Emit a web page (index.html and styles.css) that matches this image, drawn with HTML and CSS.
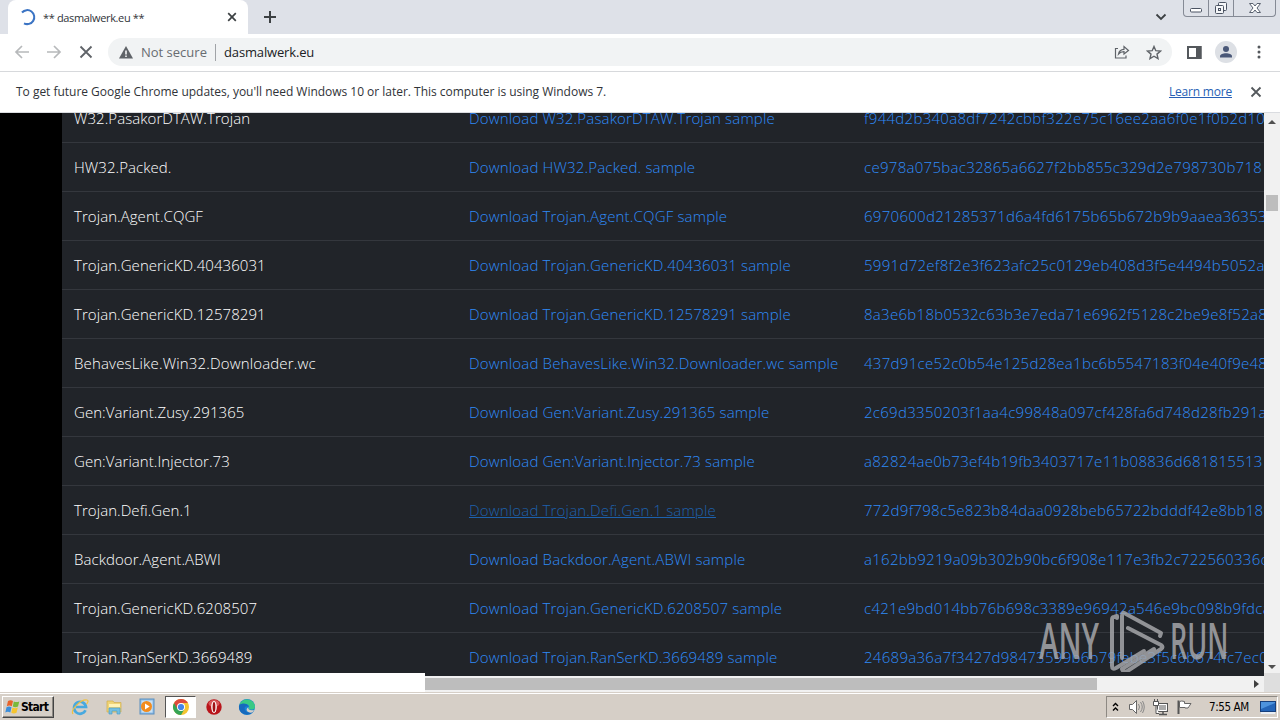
FILE: index.html
```html
<!DOCTYPE html>
<html lang="en">
<head>
    <meta charset="UTF-8">
    <title>** dasmalwerk.eu **</title>
    <link rel="stylesheet" href="styles.css">
</head>
<body>
    <div class="tabstrip">
        <div class="tab">
            <svg class="spinner" width="18" height="18" viewBox="0 0 18 18"><path d="M3 4.500A7 7 0 1 1 5 15.300" fill="none" stroke="#3b74c4" stroke-width="2"/></svg>
            <span class="tab-title">** dasmalwerk.eu **</span>
            <svg width="10" height="10" viewBox="0 0 10 10"><path d="M1.2 1.2l7.6 7.6M8.8 1.2L1.2 8.8" stroke="#3c4043" stroke-width="1.7"/></svg>
        </div>
        <svg class="new-tab" width="14" height="14" viewBox="0 0 14 14"><path d="M7 1v12M1 7h12" stroke="#3c4043" stroke-width="2"/></svg>
        <svg class="tab-search" width="12" height="8" viewBox="0 0 12 8"><path d="M1.5 1.5L6 6l4.500-4.500" fill="none" stroke="#3c4043" stroke-width="1.8"/></svg>
        <div class="window-buttons">
            <span><svg width="14" height="16" viewBox="0 0 14 16"><rect x="1.500" y="8.500" width="11" height="3.500" rx="1" fill="#fff" stroke="#4b5362"/></svg></span>
            <span><svg width="14" height="16" viewBox="0 0 14 16"><rect x="4.500" y="2.500" width="8" height="8" rx="1" fill="#f5f6f8" stroke="#4b5362"/><rect x="1.500" y="5.500" width="8" height="8" rx="1" fill="#f5f6f8" stroke="#4b5362"/><rect x="4.500" y="8.500" width="2" height="2" fill="none" stroke="#4b5362"/></svg></span>
            <span class="wide"><svg width="14" height="16" viewBox="0 0 14 16"><path d="M1.500 3.500h3.500l2 2.500 2-2.500h3.500L9 8l3.500 4.500H9L7 10l-2 2.500H1.500L5 8z" fill="#fff" stroke="#5a6270"/></svg></span>
        </div>
    </div>

    <div class="toolbar">
        <svg class="nav" width="16" height="14" viewBox="0 0 16 14"><path d="M15 7H2M8 1L2 7l6 6" fill="none" stroke="#b7b9bb" stroke-width="1.700"/></svg>
        <svg class="nav" width="16" height="14" viewBox="0 0 16 14"><path d="M1 7h13M8 1l6 6-6 6" fill="none" stroke="#b7b9bb" stroke-width="1.700"/></svg>
        <svg class="nav stop" width="14" height="14" viewBox="0 0 14 14"><path d="M1.500 1.500l11 11M12.500 1.500l-11 11" stroke="#5f6368" stroke-width="1.800"/></svg>
        <div class="omnibox">
            <svg width="14" height="13" viewBox="0 0 14 13"><path d="M7 0l7 12.500H0z" fill="#5f6368"/><path d="M7 4.500v4M7 9.500v1.500" stroke="#fff" stroke-width="1.500"/></svg>
            <span class="not-secure">Not secure</span>
            <span class="divider"></span>
            <span class="address">dasmalwerk.eu</span>
            <svg class="share" width="16" height="14" viewBox="0 0 16 14"><path d="M4 3.500H1.500v9.500H12v-2.500M4.500 9C5 6 7 4.500 10 4.300V1.500L14.500 5.500 10 9V6.700C7.500 6.700 6 7.200 4.500 9z" fill="none" stroke="#5f6368" stroke-width="1.200"/></svg>
            <svg width="16" height="15" viewBox="0 0 16 15"><path d="M8 1.500l1.800 4.200 4.700.4-3.500 3 1 4.500-4-2.400-4 2.400 1-4.500-3.500-3 4.700-.4z" fill="none" stroke="#5f6368" stroke-width="1.400"/></svg>
        </div>
        <svg class="panel" width="15" height="13" viewBox="0 0 15 13"><path d="M1 1h12.500v11H1z" fill="none" stroke="#54585c" stroke-width="2"/><path d="M9 0h5.500v13H9z" fill="#54585c"/></svg>
        <svg class="avatar" width="22" height="22" viewBox="0 0 22 22"><circle cx="11" cy="11" r="11" fill="#dde0e5"/><circle cx="11" cy="8" r="3" fill="#4a5878"/><path d="M5 16.500v-1.200c0-4 12-4 12 0v1.200z" fill="#4a5878"/></svg>
        <svg class="kebab" width="4" height="14" viewBox="0 0 4 14"><circle cx="2" cy="2" r="1.500" fill="#54585c"/><circle cx="2" cy="7" r="1.500" fill="#54585c"/><circle cx="2" cy="12" r="1.500" fill="#54585c"/></svg>
    </div>

    <div class="infobar">
        <span class="message">To get future Google Chrome updates, you'll need Windows 10 or later. This computer is using Windows 7.</span>
        <a class="learn-more" href="#">Learn more</a>
        <svg width="12" height="12" viewBox="0 0 12 12"><path d="M1.500 1.500l9 9M10.500 1.500l-9 9" stroke="#54585c" stroke-width="1.800"/></svg>
    </div>

    <div class="viewport">
        <div class="page">
            <div class="samples">
                <div class="row"><span>W32.PasakorDTAW.Trojan</span><a href="#">Download W32.PasakorDTAW.Trojan sample</a><a class="hash" href="#">f944d2b340a8df7242cbbf322e75c16ee2aa6f0e1f0b2d10</a></div>
                <div class="row"><span>HW32.Packed.</span><a href="#">Download HW32.Packed. sample</a><a class="hash" href="#">ce978a075bac32865a6627f2bb855c329d2e798730b718</a></div>
                <div class="row"><span>Trojan.Agent.CQGF</span><a href="#">Download Trojan.Agent.CQGF sample</a><a class="hash" href="#">6970600d21285371d6a4fd6175b65b672b9b9aaea36353</a></div>
                <div class="row"><span>Trojan.GenericKD.40436031</span><a href="#">Download Trojan.GenericKD.40436031 sample</a><a class="hash" href="#">5991d72ef8f2e3f623afc25c0129eb408d3f5e4494b5052a</a></div>
                <div class="row"><span>Trojan.GenericKD.12578291</span><a href="#">Download Trojan.GenericKD.12578291 sample</a><a class="hash" href="#">8a3e6b18b0532c63b3e7eda71e6962f5128c2be9e8f52a8</a></div>
                <div class="row"><span class="wide-name">BehavesLike.Win32.Downloader.wc</span><a href="#">Download BehavesLike.Win32.Downloader.wc sample</a><a class="hash" href="#">437d91ce52c0b54e125d28ea1bc6b5547183f04e40f9e48</a></div>
                <div class="row"><span>Gen:Variant.Zusy.291365</span><a href="#">Download Gen:Variant.Zusy.291365 sample</a><a class="hash" href="#">2c69d3350203f1aa4c99848a097cf428fa6d748d28fb291a</a></div>
                <div class="row"><span>Gen:Variant.Injector.73</span><a href="#">Download Gen:Variant.Injector.73 sample</a><a class="hash" href="#">a82824ae0b73ef4b19fb3403717e11b08836d681815513</a></div>
                <div class="row"><span>Trojan.Defi.Gen.1</span><a class="hovered" href="#">Download Trojan.Defi.Gen.1 sample</a><a class="hash" href="#">772d9f798c5e823b84daa0928beb65722bdddf42e8bb18</a></div>
                <div class="row"><span>Backdoor.Agent.ABWI</span><a href="#">Download Backdoor.Agent.ABWI sample</a><a class="hash" href="#">a162bb9219a09b302b90bc6f908e117e3fb2c722560336c</a></div>
                <div class="row"><span>Trojan.GenericKD.6208507</span><a href="#">Download Trojan.GenericKD.6208507 sample</a><a class="hash" href="#">c421e9bd014bb76b698c3389e96942a546e9bc098b9fdca</a></div>
                <div class="row"><span>Trojan.RanSerKD.3669489</span><a href="#">Download Trojan.RanSerKD.3669489 sample</a><a class="hash" href="#">24689a36a7f3427d98473599b6b79febe3f5c6b674fc7ec0</a></div>
            </div>
        </div>
        <div class="vscroll">
            <svg width="8" height="4" viewBox="0 0 8 4"><path d="M0 4l4-4 4 4z" fill="#505050"/></svg>
            <div class="vthumb"></div>
            <svg class="down" width="8" height="4" viewBox="0 0 8 4"><path d="M0 0l4 4 4-4z" fill="#505050"/></svg>
        </div>
    </div>
    <div class="bottom">
        <div class="status"></div>
        <div class="hscroll">
            <div class="hthumb"></div>
            <svg width="5" height="8" viewBox="0 0 5 8"><path d="M0 0l5 4-5 4z" fill="#404040"/></svg>
        </div>
        <div class="corner"></div>
    </div>

    <div class="taskbar">
        <div class="start">
            <svg width="16" height="16" viewBox="0 0 16 16"><path d="M3 2q2.500-1.500 5 0L6.800 7.200q-2.500-1.300-5 0z" fill="#e8632a"/><path d="M8.800 2.400q2.500 1.300 5.500 0L13 7.600q-2.700 1.300-5.200 0z" fill="#79b93c"/><path d="M1.500 8.200q2.500-1.300 5 0L5.300 13.400q-2.500-1.300-5 0z" fill="#3b8edb"/><path d="M7.500 8.600q2.500 1.300 5.300 0l-1.300 5.200q-2.600 1.300-5.200 0z" fill="#f6c52f"/></svg>
            <span>Start</span>
        </div>
        <div class="launch">
            <svg width="18" height="18" viewBox="0 0 18 18"><path d="M14.500 12.300A6 6 0 1 1 15 9H5" fill="none" stroke="#48a9df" stroke-width="2.700"/><path d="M2 16C-1 12 10 1 16 2c2 .5.500 3-.5 4" fill="none" stroke="#efc143" stroke-width="1.200"/></svg>
            <svg width="18" height="18" viewBox="0 0 18 18"><path d="M2 3h6l1 1.500h7V14H2z" fill="#efd477" stroke="#d0ac4c" stroke-width=".7"/><path d="M4 6h11v3H4z" fill="#fff2b6"/><path d="M4 16v-6h11v6h-3v-3H7v3z" fill="#73bfe1" stroke="#4b9dc8" stroke-width=".7"/></svg>
            <svg width="18" height="18" viewBox="0 0 18 18"><rect x="2" y="1" width="14" height="15" fill="#8dbce5" stroke="#5a8fc0"/><rect x="3.500" y="2.500" width="11" height="12" fill="#c9e1f5"/><circle cx="8.500" cy="8.500" r="5.500" fill="#f28c1e"/><path d="M7 5.500v6l4.700-3z" fill="#fff"/></svg>
            <div class="active">
                <svg width="18" height="18" viewBox="0 0 18 18"><circle cx="9" cy="9" r="8" fill="#f4c430"/><path d="M9 9L2.070 5A8 8 0 0 0 9 17l3.500-6z" fill="#35a455"/><path d="M9 5h6.930A8 8 0 0 0 2.070 5L5.500 11z" fill="#dc4a3d"/><circle cx="9" cy="9" r="4" fill="#fff"/><circle cx="9" cy="9" r="3.100" fill="#4285e8"/></svg>
            </div>
            <svg width="18" height="18" viewBox="0 0 18 18"><circle cx="9" cy="9" r="7.700" fill="#b9151b"/><ellipse cx="9" cy="5.500" rx="5.500" ry="3.500" fill="#d9565a"/><ellipse cx="9" cy="9" rx="2.800" ry="6" fill="#fff"/><ellipse cx="9" cy="9" rx="1.400" ry="5" fill="#a01015"/></svg>
            <svg width="18" height="18" viewBox="0 0 18 18"><circle cx="9" cy="9" r="8" fill="#1683d5"/><path d="M1.500 7C3 0 15-1 17 8c.3 4-4 4-6.500 3 2-3-.5-5-3-5S2.500 6 1.500 7z" fill="#39c985"/><path d="M1.500 7C4 4.500 10 5 10.500 9c-2-2-5 0-3.500 3 1.500 3 5 3 8.500 1.500C11 19 0 17 1 8z" fill="#1769bd"/><path d="M10.500 9c-1 2 1 4 5.500 3l-1.500 2.500c-5 1-8-3-4-5.500z" fill="#d6cfc7"/></svg>
        </div>
        <div class="tray">
            <svg width="7" height="10" viewBox="0 0 7 10"><path d="M1 4l2.500-2.500L6 4M1 8.500L3.500 6 6 8.500" fill="none" stroke="#000" stroke-width="1.400"/></svg>
            <svg class="speaker" width="17" height="16" viewBox="0 0 17 16"><path d="M1.500 5.500h3l4-4v13l-4-4h-3z" fill="#fff" stroke="#666"/><path d="M10.500 5q2 3 0 6M12.500 3q3.500 5 0 10M14.500 2q3.500 6 0 12" fill="none" stroke="#888"/></svg>
            <svg class="network" width="18" height="17" viewBox="0 0 18 17"><rect x="5.500" y="4.500" width="10" height="8" fill="#aaa" stroke="#555"/><path d="M6.500 5.500h8v6h-8z" fill="none" stroke="#fff"/><path d="M7 15.500h8M11 13v2" stroke="#555" stroke-width="1.500"/><path d="M1.500 2.500h5v4h-5zM4 7v7.500h3M2.500 0v2M5.500 0v2" fill="#fff" stroke="#555"/></svg>
            <svg class="flag" width="17" height="16" viewBox="0 0 17 16"><path d="M2.500 15V1.500" stroke="#555" stroke-width="2"/><path d="M3.500 2.500q2-1 5 0v2h6.500l-2 3-1 1.500H9V8.500H3.500z" fill="#fff" stroke="#666"/></svg>
            <span class="clock">7:55 AM</span>
            <svg class="desktop" width="16" height="13" viewBox="0 0 16 13"><rect x=".5" y=".5" width="15" height="10" fill="#2465b8" stroke="#163f7c"/><path d="M1 8L15 2v-1H1z" fill="#4d93dd"/><path d="M1 12h14" stroke="#e9eef4" stroke-width="2"/></svg>
        </div>
    </div>

    <div class="watermark">
        <span class="any">ANY</span>
        <svg width="56" height="64" viewBox="0 0 56 64"><g fill="none" stroke="#a5a6a9" stroke-width="4" stroke-linejoin="round" stroke-linecap="round"><path d="M8 10V8L5 9Q3 9 3 12v46q0 4 4 2l28-17"/><path d="M51 28l1-3L17 6q-4-3-4 2v42"/><path d="M19 20l33 17q3 2 0 4L17 64q-3 0-4-3l32-20"/></g></svg>
        <span class="run">RUN</span>
    </div>
</body>
</html>
```

FILE: styles.css
```css
* {
    box-sizing: border-box;
}
body {
    margin: 0;
    width: 1280px;
    height: 720px;
    overflow: hidden;
    display: flex;
    flex-direction: column;
    position: relative;
    background: #fff;
    font-family: "Open Sans", "Noto Sans", sans-serif;
    color: #303338;
}
svg {
    display: block;
    flex: none;
}
span, a {
    white-space: nowrap;
}

/* browser chrome */
.tabstrip {
    height: 34px;
    flex: none;
    display: flex;
    background: #dee1e8;
}
.tab {
    width: 240px;
    height: 34px;
    margin-left: 8px;
    padding: 0 11px;
    display: flex;
    align-items: center;
    background: #fff;
    border-radius: 8px 8px 0 0;
}
.tab-title {
    flex: 1;
    margin-left: 6px;
    font-size: 11px;
    letter-spacing: -0.35px;
}
.new-tab {
    margin: 10px 0 0 15px;
}
.tab-search {
    margin: 13px 16px 0 auto;
}
.window-buttons {
    width: 93px;
    height: 17px;
    margin-right: 4px;
    display: flex;
    border: 1px solid #858a95;
    border-top: 0;
    border-radius: 0 0 4px 4px;
}
.window-buttons span {
    width: 25px;
    display: flex;
    justify-content: center;
    border-right: 1px solid #858a95;
}
.window-buttons .wide {
    flex: 1;
    border: 0;
}
.toolbar {
    height: 38px;
    flex: none;
    display: flex;
    align-items: center;
    padding: 0 19px 1px 14px;
    border-bottom: 1px solid #d7d9dc;
}
.nav {
    margin-right: 16px;
}
.stop {
    margin: 0 15px 0 1px;
}
.omnibox {
    width: 1065px;
    height: 28px;
    display: flex;
    align-items: center;
    padding: 0 10px 0 11px;
    border-radius: 14px;
    background: #f1f3f4;
}
.not-secure {
    width: 67px;
    margin-left: 8px;
    color: #686c71;
    font-size: 13px;
}
.divider {
    width: 1px;
    height: 17px;
    margin: 0 8px 0 7px;
    background: #a0a3a7;
}
.address {
    color: #202124;
    font-size: 13px;
    letter-spacing: -0.15px;
}
.share {
    margin: 0 16px 0 auto;
}
.panel {
    margin-left: 15px;
}
.avatar {
    margin: 0 20px 0 13px;
}
.infobar {
    height: 41px;
    flex: none;
    display: flex;
    align-items: center;
    padding: 0 18px 1px 16px;
    border-bottom: 1px solid #dadce0;
    font-size: 12px;
    letter-spacing: -0.02px;
}
.learn-more {
    margin: 0 18px 0 auto;
    color: #285fb5;
    letter-spacing: -0.2px;
}

/* page */
.viewport {
    height: 560px;
    flex: none;
    display: flex;
}
.page {
    width: 1264px;
    padding-left: 62px;
    overflow: hidden;
    background: #000;
}
.samples {
    margin-top: -19px;
    background: #212429;
}
.row {
    height: 49px;
    display: grid;
    grid-template-columns: 395px 395px 1fr;
    align-items: center;
    padding-left: 12px;
    overflow: hidden;
    border-bottom: 1px solid #34373d;
    color: #fff;
    font-size: 15px;
    font-weight: 300;
    letter-spacing: 0.06px;
}
.wide-name {
    letter-spacing: 0.16px;
}
.row a {
    color: #2f8bf8;
    text-decoration: none;
    letter-spacing: 0.17px;
}
.row .hash {
    letter-spacing: 0.29px;
}
.row .hovered {
    color: #1d61ad;
    text-decoration: underline;
}
.vscroll {
    width: 16px;
    display: flex;
    flex-direction: column;
    align-items: center;
    padding: 7px 0 4px;
    background: #f1f1f1;
}
.vthumb {
    width: 12px;
    height: 16px;
    margin-top: 71px;
    background: #bdbdbd;
}
.down {
    margin-top: auto;
}
.bottom {
    height: 19px;
    flex: none;
    display: flex;
}
.status {
    width: 425px;
    background: #fff;
}
.hscroll {
    width: 839px;
    display: flex;
    align-items: center;
    border-top: 3px solid #212429;
    background: #f1f1f1;
}
.hthumb {
    width: 672px;
    height: 12px;
    background: #bdbdbd;
}
.hscroll svg {
    margin-left: 157px;
}
.corner {
    flex: 1;
    background: #dedede;
}

/* taskbar */
.taskbar {
    height: 28px;
    flex: none;
    display: flex;
    align-items: center;
    padding: 1px 2px 0;
    border-top: 1px solid #d6cfc7;
    background: #d6cfc7;
    box-shadow: inset 0 1px #fff;
}
.start {
    width: 52px;
    height: 22px;
    display: flex;
    align-items: center;
    padding-left: 2px;
    border: 1px solid;
    border-color: #fff #444 #444 #fff;
    box-shadow: inset -1px -1px #8d8983;
    color: #000;
    font: bold 12px "DejaVu Sans Condensed", sans-serif;
    letter-spacing: -0.7px;
}
.launch {
    display: flex;
    align-items: center;
    margin-left: 17px;
}
.launch svg {
    margin-right: 15.500px;
}
.active {
    width: 31px;
    height: 22px;
    margin: 0 9px 0 -7px;
    display: flex;
    align-items: center;
    padding-left: 6px;
    background: #fff;
    border: 1px solid;
    border-color: #555 #fff #fff #555;
}
.tray {
    width: 172px;
    height: 22px;
    margin-left: auto;
    display: flex;
    align-items: center;
    padding-left: 5px;
    border: 1px solid;
    border-color: #8d8983 #fff #fff #8d8983;
}
.speaker {
    margin-left: 9px;
}
.network {
    margin-left: 7px;
}
.flag {
    margin-left: 6px;
}
.clock {
    width: 42px;
    margin-left: 16px;
    color: #000;
    font: 11.500px "DejaVu Sans Condensed", sans-serif;
    letter-spacing: -0.4px;
}
.desktop {
    margin-left: 9px;
}

/* overlay logo */
.watermark {
    position: absolute;
    left: 1039px;
    top: 608px;
    width: 194px;
    height: 64px;
    display: flex;
    align-items: center;
    color: #a5a6a9;
    font: 600 50px/64px "Open Sans", sans-serif;
    opacity: 0.85;
}
.watermark span {
    width: 70px;
    transform: scaleX(0.59);
    transform-origin: left center;
}
.watermark .run {
    transform: scaleX(0.54);
}
.watermark svg {
    margin-right: 5px;
}
```
